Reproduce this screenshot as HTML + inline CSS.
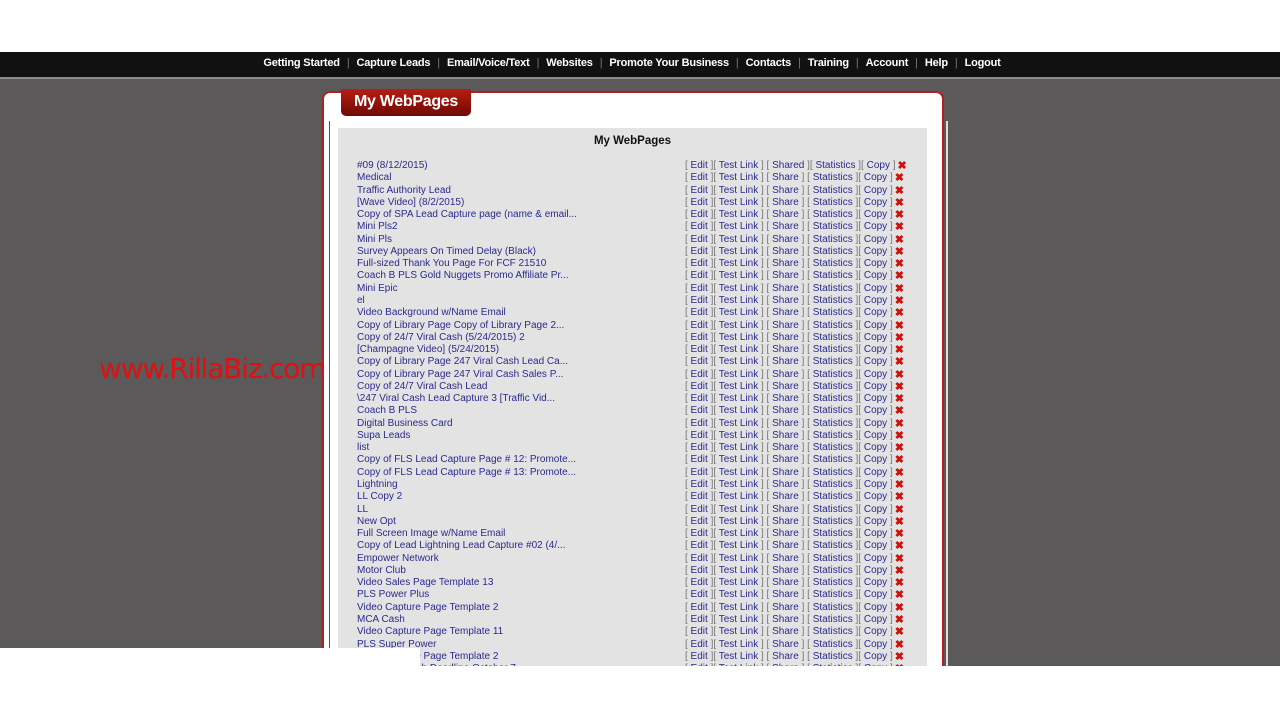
<!DOCTYPE html>
<html><head><style>
body{margin:0;width:1280px;height:720px;background:#fff;position:relative;overflow:hidden;font-family:"Liberation Sans",Arial,sans-serif}
#nav{position:absolute;top:52px;left:0;width:1280px;height:25px;background:#111;border-bottom:2px solid #8a8a8a}
#nav div{position:absolute;top:0;left:-8px;width:1280px;text-align:center;line-height:23px;color:#fff;font-size:11px;font-weight:bold;letter-spacing:-0.2px}
#nav span.s{color:#777;margin:0 7px;font-weight:normal}
#bg{position:absolute;top:79px;left:0;width:1280px;height:587px;background:#5b5959;overflow:hidden}
#panel{position:absolute;left:322px;top:12px;width:618px;height:600px;background:#fff;border:2px solid #b0201c;border-radius:8px 8px 0 0}
#tab{position:absolute;left:341px;top:10px;width:130px;height:27px;background:linear-gradient(#b81d12,#6e0a05);border-radius:0 0 5px 5px;color:#fff;font-weight:bold;font-size:16px;line-height:25px;text-align:center;letter-spacing:-0.3px}
#vline{position:absolute;left:329px;top:42px;width:1px;height:560px;background:#555}
#vline2{position:absolute;left:946px;top:42px;width:2px;height:560px;background:#ddd}
#inner{position:absolute;left:338px;top:49px;width:589px;height:560px;background:#e3e3e3}
#inner h3{margin:0;position:absolute;top:7px;width:100%;text-align:center;font-size:11.5px;color:#111}
.row{position:absolute;left:19px;width:560px;height:12px;font-size:10px;line-height:12px;color:#2a2a90;white-space:nowrap}
.row .r{position:absolute;left:328px;top:0;line-height:12px;height:12px;color:#2a2a90;white-space:nowrap;letter-spacing:0}
.row .r b{color:#777;font-weight:normal}
.x{display:inline-block;color:#d0100c;font-weight:bold;font-size:11px;line-height:12px;margin-left:2px;vertical-align:top}
#rilla{position:absolute;left:99px;top:273px;color:#e01010;font-size:28px;font-family:"DejaVu Sans",sans-serif;letter-spacing:-1.2px}
#wb{position:absolute;left:0;top:648px;width:420px;height:18px;background:#fff}
</style></head><body>
<div id="nav"><div>Getting Started<span class="s">|</span>Capture Leads<span class="s">|</span>Email/Voice/Text<span class="s">|</span>Websites<span class="s">|</span>Promote Your Business<span class="s">|</span>Contacts<span class="s">|</span>Training<span class="s">|</span>Account<span class="s">|</span>Help<span class="s">|</span>Logout</div></div>
<div id="bg">
<div id="panel"></div>
<div id="tab">My WebPages</div>
<div id="vline"></div><div id="vline2"></div>
<div id="inner"><h3>My WebPages</h3><div id="rows"></div></div>
<div id="rilla">www.RillaBiz.com</div>
</div>
<div id="wb"></div>
<script>
var n=["#09 (8/12/2015)","Medical","Traffic Authority Lead","[Wave Video] (8/2/2015)","Copy of SPA Lead Capture page (name &amp; email...","Mini Pls2","Mini Pls","Survey Appears On Timed Delay (Black)","Full-sized Thank You Page For FCF 21510","Coach B PLS Gold Nuggets Promo Affiliate Pr...","Mini Epic","el","Video Background w/Name Email","Copy of Library Page Copy of Library Page 2...","Copy of 24/7 Viral Cash (5/24/2015) 2","[Champagne Video] (5/24/2015)","Copy of Library Page 247 Viral Cash Lead Ca...","Copy of Library Page 247 Viral Cash Sales P...","Copy of 24/7 Viral Cash Lead","\\247 Viral Cash Lead Capture 3 [Traffic Vid...","Coach B PLS","Digital Business Card","Supa Leads","list","Copy of FLS Lead Capture Page # 12: Promote...","Copy of FLS Lead Capture Page # 13: Promote...","Lightning","LL Copy 2","LL","New Opt","Full Screen Image w/Name Email","Copy of Lead Lightning Lead Capture #02 (4/...","Empower Network","Motor Club","Video Sales Page Template 13","PLS Power Plus","Video Capture Page Template 2","MCA Cash","Video Capture Page Template 11","PLS Super Power","Video Capture Page Template 2","Custom Launch Deadline October 7"];
var h="";for(var i=0;i<n.length;i++){var sh=i==0?"<b>[</b> Shared <b>][</b>":"<b>[</b> Share <b>]</b> <b>[</b>";
h+='<div class="row" style="top:'+(32+i*12.27)+'px">'+n[i]+'<span class="r"><b>[</b> Edit <b>][</b> Test Link <b>]</b> '+sh+' Statistics <b>][</b> Copy <b>]</b><span class="x">✖</span></span></div>';}
document.getElementById("rows").innerHTML=h;
</script>
</body></html>
